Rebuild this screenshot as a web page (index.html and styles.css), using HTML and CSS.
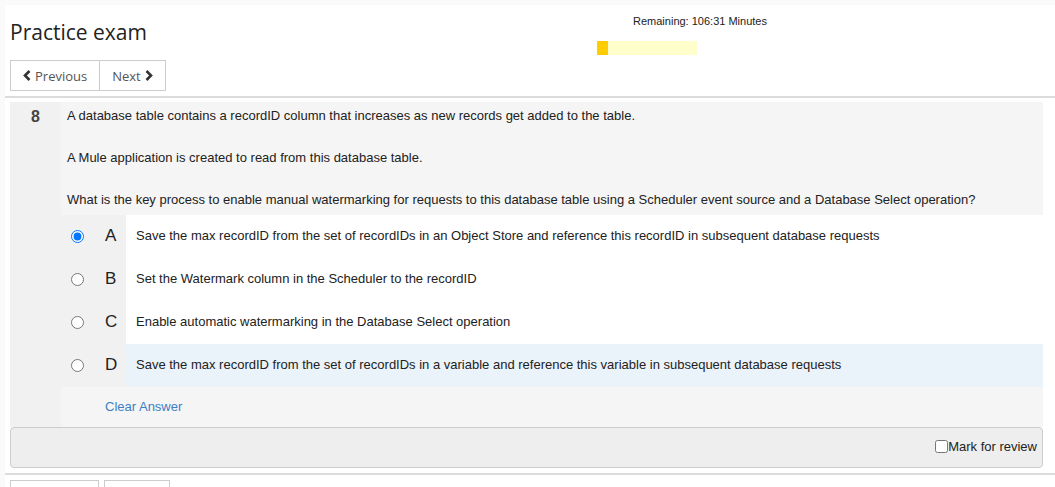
FILE: index.html
```html
<!DOCTYPE html>
<html>
<head>
<meta charset="utf-8">
<link rel="stylesheet" href="styles.css">
</head>
<body>
<div class="page">
  <div class="header">
    <div class="title-block">
      <h1 class="title">Practice exam</h1>
      <div class="btn-group">
        <button class="btn"><svg class="chev" width="8" height="11" viewBox="0 0 8 11"><path d="M6.5 1 L2 5.5 L6.5 10" fill="none" stroke="#333" stroke-width="2.6"/></svg> Previous</button>
        <button class="btn">Next <svg class="chev" width="8" height="11" viewBox="0 0 8 11"><path d="M1.5 1 L6 5.5 L1.5 10" fill="none" stroke="#333" stroke-width="2.6"/></svg></button>
      </div>
    </div>
    <div class="timer">
      <div class="timer-text">Remaining: 106:31 Minutes</div>
      <div class="bar"><div class="bar-fill" style="width:11%"></div></div>
    </div>
  </div>
  <div class="rule"></div>

  <div class="question">
    <div class="qnum">8</div>
    <div class="qbody">
      <div class="qtext">
        <p>A database table contains a recordID column that increases as new records get added to the table.</p>
        <p>A Mule application is created to read from this database table.</p>
        <p>What is the key process to enable manual watermarking for requests to this database table using a Scheduler event source and a Database Select operation?</p>
      </div>
      <div class="options">
        <label class="opt">
          <span class="opt-radio"><input type="radio" name="q8" checked></span>
          <span class="opt-letter">A</span>
          <span class="opt-text">Save the max recordID from the set of recordIDs in an Object Store and reference this recordID in subsequent database requests</span>
        </label>
        <label class="opt">
          <span class="opt-radio"><input type="radio" name="q8"></span>
          <span class="opt-letter">B</span>
          <span class="opt-text">Set the Watermark column in the Scheduler to the recordID</span>
        </label>
        <label class="opt">
          <span class="opt-radio"><input type="radio" name="q8"></span>
          <span class="opt-letter">C</span>
          <span class="opt-text">Enable automatic watermarking in the Database Select operation</span>
        </label>
        <label class="opt opt-hover">
          <span class="opt-radio"><input type="radio" name="q8"></span>
          <span class="opt-letter">D</span>
          <span class="opt-text">Save the max recordID from the set of recordIDs in a variable and reference this variable in subsequent database requests</span>
        </label>
      </div>
      <div class="clear-row"><a class="clear-link">Clear Answer</a></div>
    </div>
  </div>
  <div class="panel-footer">
    <label class="review"><input type="checkbox">Mark for review</label>
  </div>
  <div class="rule rule-bottom"></div>
  <div class="bottom-nav">
    <div class="btn-group"><button class="btn btn-wide">&nbsp;</button></div>
    <div class="btn-group"><button class="btn btn-narrow">&nbsp;</button></div>
  </div>
</div>
</body>
</html>
```

FILE: styles.css
```css
html, body {
  margin: 0;
  padding: 0;
}
body {
  background: #fafafa;
  font-family: "Liberation Sans", Arial, sans-serif;
  color: #222;
  overflow: hidden;
}
.page {
  margin: 5px 0 0 5px;
  background: #fff;
  min-height: 600px;
}
.header {
  display: flex;
  padding-left: 5px;
}
.title-block {
  flex: 0 0 587px;
  padding-top: 12px;
}
.title {
  margin: 0;
  font-family: "Open Sans", "Noto Sans", sans-serif;
  font-weight: 400;
  font-size: 21px;
  line-height: 30px;
  color: #222;
}
.btn-group {
  display: flex;
  margin-top: 13px;
}
.btn {
  font-family: "Open Sans", "Noto Sans", sans-serif;
  font-size: 13px;
  color: #555;
  background: #fff;
  border: 1px solid #ccc;
  height: 31px;
  padding: 0 12px;
  display: flex;
  align-items: center;
  gap: 4px;
  margin: 0;
}
.btn + .btn {
  border-left: none;
}
.chev {
  display: block;
}
.timer {
  width: 206px;
  padding-top: 9px;
}
.timer-text {
  font-size: 11px;
  line-height: 14px;
  text-align: center;
  color: #222;
}
.bar {
  margin-top: 13px;
  width: 100px;
  height: 14px;
  background: #ffffcc;
}
.bar-fill {
  height: 100%;
  background: #ffcc00;
}
.rule {
  height: 2px;
  background: #dcdcdc;
  margin-top: 5px;
}
.question {
  display: flex;
  margin: 4px 12px 0 5px;
  background: #f1f1f1;
}
.qnum {
  width: 51px;
  flex: 0 0 51px;
  text-align: center;
  font-weight: bold;
  font-size: 16px;
  color: #444;
  padding-top: 5px;
  line-height: 20px;
}
.qbody {
  flex: 1;
}
.qtext {
  background: #f5f5f5;
  padding: 5px 6px 6px 6px;
  font-size: 13px;
}
.qtext p {
  margin: 0 0 24px 0;
  line-height: 18px;
}
.qtext p:last-child {
  margin-bottom: 0;
}
.options {
  display: flex;
  flex-direction: column;
}
.opt {
  display: flex;
  height: 43px;
  align-items: stretch;
  font-size: 13px;
}
.opt-radio {
  width: 32px;
  flex: 0 0 32px;
  display: flex;
  align-items: center;
  justify-content: center;
}
.opt-radio input {
  margin: 0;
  width: 13px;
  height: 13px;
}
.opt-letter {
  width: 21px;
  flex: 0 0 21px;
  padding-left: 12px;
  padding-bottom: 2px;
  display: flex;
  align-items: center;
  font-size: 17px;
  color: #222;
}
.opt-text {
  flex: 1;
  background: #fff;
  display: flex;
  align-items: center;
  padding-left: 10px;
  padding-bottom: 2px;
}
.opt-hover .opt-text {
  background: #eaf2fa;
}
.clear-row {
  height: 40px;
  background: #f5f5f5;
  display: flex;
  align-items: center;
  padding-left: 44px;
  padding-bottom: 1px;
  box-sizing: border-box;
}
.clear-link {
  font-size: 13px;
  color: #3d7fc4;
  cursor: pointer;
}
.panel-footer {
  margin: 0 12px 0 5px;
  height: 41px;
  box-sizing: border-box;
  border: 1px solid #ccc;
  border-radius: 4px;
  background: #eeeeee;
  display: flex;
  align-items: center;
  justify-content: flex-end;
  padding: 0 5px 3px 0;
}
.review {
  display: flex;
  align-items: center;
  font-size: 13px;
  color: #222;
}
.review input {
  margin: 0;
  width: 13px;
  height: 13px;
}
.rule-bottom {
  margin-top: 5px;
}
.bottom-nav {
  display: flex;
  gap: 5px;
  padding-left: 5px;
}
.bottom-nav .btn-group {
  margin-top: 5px;
}
.btn-wide {
  width: 89px;
}
.btn-narrow {
  width: 66px;
}
```
